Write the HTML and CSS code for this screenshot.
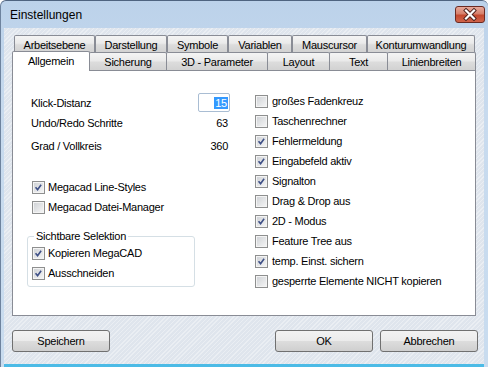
FILE: index.html
```html
<!DOCTYPE html>
<html lang="de">
<head>
    <meta charset="UTF-8">
    <title>Einstellungen</title>
    <link rel="stylesheet" href="styles.css">
</head>
<body>
    <div class="window">
        <div class="titlebar">
            <span class="title">Einstellungen</span>
            <span class="close">
                <svg width="28" height="15" viewBox="0 0 28 15">
                    <path d="M10 3.5 L18 11.5 M18 3.5 L10 11.5" stroke="#4a1e1a" stroke-width="4" stroke-linecap="square"/>
                    <path d="M10 3.5 L18 11.5 M18 3.5 L10 11.5" stroke="#ffffff" stroke-width="2.2" stroke-linecap="square"/>
                </svg>
            </span>
        </div>

        <div class="client">
            <div class="tabrow back">
                <div class="tab t-arbeit">Arbeitsebene</div>
                <div class="tab t-darst">Darstellung</div>
                <div class="tab t-symb">Symbole</div>
                <div class="tab t-var">Variablen</div>
                <div class="tab t-maus">Mauscursor</div>
                <div class="tab t-kontur">Konturumwandlung</div>
            </div>
            <div class="tabrow front">
                <div class="tab active t-allg">Allgemein</div>
                <div class="tab t-sich">Sicherung</div>
                <div class="tab t-3d">3D - Parameter</div>
                <div class="tab t-layout">Layout</div>
                <div class="tab t-text">Text</div>
                <div class="tab t-linie">Linienbreiten</div>
            </div>

            <div class="panel">
                <div class="col left">
                    <div class="field r1">
                        <span>Klick-Distanz</span>
                        <span class="input"><span class="sel">15</span></span>
                    </div>
                    <div class="field r2">
                        <span>Undo/Redo Schritte</span>
                        <span class="val">63</span>
                    </div>
                    <div class="field r3">
                        <span>Grad / Vollkreis</span>
                        <span class="val">360</span>
                    </div>

                    <div class="check first-check"><span class="cb on"><svg viewBox="0 0 13 13"><path d="M3 6.3 L5.4 9 L9.6 3.2"/></svg></span>Megacad Line-Styles</div>
                    <div class="check"><span class="cb"></span>Megacad Datei-Manager</div>

                    <fieldset class="group">
                        <legend>Sichtbare Selektion</legend>
                        <div class="check"><span class="cb on"><svg viewBox="0 0 13 13"><path d="M3 6.3 L5.4 9 L9.6 3.2"/></svg></span>Kopieren MegaCAD</div>
                        <div class="check"><span class="cb on"><svg viewBox="0 0 13 13"><path d="M3 6.3 L5.4 9 L9.6 3.2"/></svg></span>Ausschneiden</div>
                    </fieldset>
                </div>

                <div class="col right">
                    <div class="check"><span class="cb"></span>großes Fadenkreuz</div>
                    <div class="check"><span class="cb"></span>Taschenrechner</div>
                    <div class="check"><span class="cb on"><svg viewBox="0 0 13 13"><path d="M3 6.3 L5.4 9 L9.6 3.2"/></svg></span>Fehlermeldung</div>
                    <div class="check"><span class="cb on"><svg viewBox="0 0 13 13"><path d="M3 6.3 L5.4 9 L9.6 3.2"/></svg></span>Eingabefeld aktiv</div>
                    <div class="check"><span class="cb on"><svg viewBox="0 0 13 13"><path d="M3 6.3 L5.4 9 L9.6 3.2"/></svg></span>Signalton</div>
                    <div class="check"><span class="cb"></span>Drag &amp; Drop aus</div>
                    <div class="check"><span class="cb on"><svg viewBox="0 0 13 13"><path d="M3 6.3 L5.4 9 L9.6 3.2"/></svg></span>2D - Modus</div>
                    <div class="check"><span class="cb"></span>Feature Tree aus</div>
                    <div class="check"><span class="cb on"><svg viewBox="0 0 13 13"><path d="M3 6.3 L5.4 9 L9.6 3.2"/></svg></span>temp. Einst. sichern</div>
                    <div class="check"><span class="cb"></span>gesperrte Elemente NICHT kopieren</div>
                </div>
            </div>

            <div class="buttons">
                <button class="btn">Speichern</button>
                <span class="spacer"></span>
                <button class="btn">OK</button>
                <button class="btn">Abbrechen</button>
            </div>
        </div>
    </div>
</body>
</html>
```

FILE: styles.css
```css
html, body {
    margin: 0;
    width: 488px;
    height: 367px;
    overflow: hidden;
    font-family: "Liberation Sans", Arial, sans-serif;
    font-size: 11px;
    letter-spacing: -0.25px;
    color: #000;
}

.window {
    width: 488px;
    height: 367px;
    box-sizing: border-box;
    display: flex;
    flex-direction: column;
    background: linear-gradient(#bcd2ea, #c7daee 30%, #c9dcef);
    border-top: 1px solid #4f6480;
    border-left: 1px solid #6e839e;
    border-radius: 6px 6px 0 0;
}

.titlebar {
    height: 27px;
    display: flex;
    align-items: center;
    padding: 0 3px 0 9px;
}

.title {
    flex: 1;
    font-size: 12px;
    letter-spacing: 0;
}

.close {
    width: 30px;
    height: 17px;
    box-sizing: border-box;
    border: 1px solid #6b2a22;
    border-radius: 3px;
    background: linear-gradient(#e7a99a, #d6806c 45%, #c4492f 55%, #d0644b);
    display: flex;
    align-items: center;
    justify-content: center;
}

.client {
    flex: 1;
    margin: 0 4px 0 3px;
    padding: 7px 6px 0 8px;
    background-color: #dfe5ed;
    background-image: repeating-linear-gradient(135deg, rgba(255,255,255,0.35) 0 1px, transparent 1px 3px);
    border-bottom: 3px solid #4cbbe6;
    display: flex;
    flex-direction: column;
}

/* Reiter */
.tabrow {
    display: flex;
    align-items: flex-start;
}

.tabrow.back {
    margin-left: 2px;
    height: 17px;
}

.tabrow.front {
    height: 18px;
}

.tab {
    box-sizing: border-box;
    height: 100%;
    border: 1px solid #898c95;
    border-bottom: none;
    border-radius: 2px 2px 0 0;
    background: linear-gradient(#f4f4f4, #eaeaea 45%, #dcdcdc 55%, #d2d2d2);
    display: flex;
    align-items: center;
    justify-content: center;
    padding-top: 1px;
    white-space: nowrap;
}

.tabrow.front .tab {
    margin-right: -1px;
}

.tab.active {
    position: relative;
    z-index: 2;
    height: 20px;
    margin-top: -1px;
    background: #fff;
    padding-bottom: 2px;
}

.t-arbeit { width: 81px; }
.t-darst { width: 72px; }
.t-symb { width: 61px; }
.t-var { width: 64px; }
.t-maus { width: 75px; }
.t-kontur { width: 108px; }

.t-allg { width: 78px; }
.t-sich { width: 78px; }
.t-3d { width: 102px; }
.t-layout { width: 63px; }
.t-text { width: 59px; }
.t-linie { width: 89px; }

/* Seite */
.panel {
    box-sizing: border-box;
    width: 464px;
    height: 246px;
    border: 1px solid #898c95;
    background: #fff;
    display: flex;
    gap: 25px;
    padding: 20px 0 0 14px;
}

.col {
    display: flex;
    flex-direction: column;
}

.col.left {
    width: 203px;
    margin-top: 2px;
}

.field {
    display: flex;
    align-items: center;
    justify-content: space-between;
    padding-left: 4px;
    height: 18px;
}

.field.r1 { height: 19px; }
.field.r2 { margin-top: 2px; }
.field.r3 { margin-top: 5px; }

.val {
    padding-right: 2px;
}

.input {
    box-sizing: border-box;
    width: 32px;
    height: 19px;
    border: 1px solid #a9bdd3;
    border-radius: 2px;
    display: flex;
    align-items: center;
    justify-content: flex-end;
    padding-right: 1px;
}

.sel {
    background: #3399ff;
    color: #fff;
    line-height: 12px;
    padding: 0 1px;
}

.check {
    display: flex;
    align-items: center;
    height: 20px;
    white-space: nowrap;
}

.col.left > .check {
    padding-left: 5px;
}

.first-check {
    margin-top: 22px;
}

.cb {
    box-sizing: border-box;
    width: 13px;
    height: 13px;
    margin-right: 3px;
    border: 1px solid #8e8f8f;
    box-shadow: inset 0 0 0 1px #f4f4f4;
    background: linear-gradient(135deg, #cdd0d4, #f7f7f7);
    flex-shrink: 0;
    display: flex;
}

.col.right .cb {
    margin-right: 4px;
}

.cb svg {
    width: 11px;
    height: 11px;
}

.cb svg path {
    fill: none;
    stroke: #3f5087;
    stroke-width: 1.9;
}

.group {
    margin: 12px 0 0 0;
    width: 168px;
    box-sizing: border-box;
    border: 1px solid #d5dfe5;
    border-radius: 3px;
    padding: 0 0 3px 4px;
}

.group legend {
    margin-left: 2px;
    padding: 0 2px;
    line-height: 14px;
}

/* Knöpfe */
.buttons {
    display: flex;
    margin-top: 14px;
    gap: 7px;
}

.spacer {
    flex: 1;
}

.btn {
    box-sizing: border-box;
    width: 98px;
    height: 22px;
    font-family: "Liberation Sans", Arial, sans-serif;
    font-size: 11px;
    letter-spacing: -0.25px;
    color: #000;
    border: 1px solid #707070;
    border-radius: 3px;
    background: linear-gradient(#f2f2f2, #ebebeb 50%, #dddddd 50%, #cfcfcf);
    padding: 0;
}
```
